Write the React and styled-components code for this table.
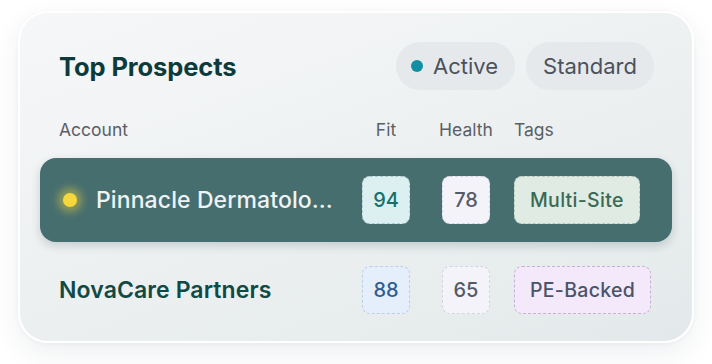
import * as React from "react";
import styled, { createGlobalStyle } from "styled-components";

const GlobalStyle = createGlobalStyle`
  html, body {
    margin: 0;
    padding: 0;
    background: #ffffff;
    font-family: Inter, "Noto Sans", sans-serif;
  }
`;

const Page = styled.div`
  width: 712px;
  height: 364px;
  padding: 11px 0 0 18px;
  box-sizing: border-box;
`;

const Card = styled.div`
  width: 676px;
  height: 332px;
  box-sizing: border-box;
  padding: 29px 20px 0 20px;
  border-radius: 30px;
  border: 2px solid #ffffff;
  background: linear-gradient(160deg, #f6f7f8 0%, #eef1f2 45%, #e3e9ea 100%);
  box-shadow: 0 10px 28px rgba(30, 50, 60, 0.08), 0 1px 4px rgba(30, 50, 60, 0.04);
`;

const TopBar = styled.div`
  display: flex;
  align-items: center;
  justify-content: space-between;
  padding: 0 18px 0 19px;
  height: 48px;
`;

const Title = styled.h2`
  margin: 0;
  font-size: 25.5px;
  font-weight: 700;
  letter-spacing: -0.1px;
  color: #0d3a3b;
`;

const Pills = styled.div`
  display: flex;
  gap: 11px;
`;

const Pill = styled.div`
  display: flex;
  align-items: center;
  gap: 10px;
  height: 48px;
  padding: 0 17px 0 ${(p) => (p.$dot ? "15px" : "17px")};
  border-radius: 24px;
  background: #e6e9ec;
  color: #4b525c;
  font-size: 22px;
  font-weight: 400;
`;

const Dot = styled.span`
  width: 12px;
  height: 12px;
  border-radius: 50%;
  background: #138fa3;
`;

const Grid = styled.div`
  display: grid;
  grid-template-columns: 303px 80px 72px 1fr;
  align-items: center;
  padding: 0 19px;
`;

const HeaderRow = styled(Grid)`
  margin-top: 29px;
  margin-bottom: 19px;
  height: 20px;
`;

const HeaderCell = styled.div`
  font-size: 17.5px;
  color: #5a5f66;
  width: ${(p) => (p.$center ? "48px" : "auto")};
  white-space: nowrap;
  display: flex;
  justify-content: ${(p) => (p.$center ? "center" : "flex-start")};
`;

const Row = styled(Grid)`
  height: 84px;
  border-radius: 16px;
  margin-bottom: 6px;
  background: ${(p) => (p.$active ? "#466e6f" : "transparent")};
  box-shadow: ${(p) =>
    p.$active ? "0 4px 10px rgba(20, 50, 55, 0.18)" : "none"};
`;

const Account = styled.div`
  display: flex;
  align-items: center;
  gap: 19px;
  min-width: 0;
  padding-right: 22px;
  padding-left: ${(p) => (p.$active ? "4px" : "0")};
`;

const Glow = styled.span`
  flex: none;
  width: 14px;
  height: 14px;
  border-radius: 50%;
  background: #f7d83c;
  box-shadow: 0 0 8px 5px rgba(247, 216, 60, 0.45);
`;

const Name = styled.span`
  font-size: 23px;
  font-weight: ${(p) => (p.$active ? 500 : 600)};
  letter-spacing: 0.1px;
  color: ${(p) => (p.$active ? "#eef3f4" : "#114a45")};
  white-space: nowrap;
  overflow: hidden;
  text-overflow: ellipsis;
`;

const tones = {
  teal: { bg: "#dcf0f2", fg: "#17706a", line: "rgba(110, 160, 170, 0.45)" },
  grey: { bg: "#f3f3f9", fg: "#555a68", line: "rgba(170, 175, 195, 0.45)" },
  blue: { bg: "#e5eefb", fg: "#2e5e90", line: "rgba(160, 180, 215, 0.55)" },
  green: { bg: "#e0ebe3", fg: "#3a6a55", line: "rgba(150, 175, 160, 0.55)" },
  lilac: { bg: "#f3e9fb", fg: "#4a5468", line: "rgba(190, 170, 205, 0.85)" },
};

const Chip = styled.div`
  box-sizing: border-box;
  height: 48px;
  min-width: 48px;
  padding: ${(p) => (p.$wide ? "0 15px" : "0")};
  display: inline-flex;
  align-items: center;
  justify-content: center;
  justify-self: start;
  border-radius: 8px;
  border: 1.5px dashed ${(p) => tones[p.$tone].line};
  background: ${(p) => tones[p.$tone].bg};
  color: ${(p) => tones[p.$tone].fg};
  font-size: ${(p) => (p.$wide ? "19.5px" : "20px")};
  letter-spacing: ${(p) => (p.$wide ? "0.3px" : "0")};
  font-weight: 500;
  white-space: nowrap;
`;

const prospects = [
  {
    name: "Pinnacle Dermatology Group",
    fit: 94,
    fitTone: "teal",
    health: 78,
    tag: "Multi-Site",
    tagTone: "green",
    active: true,
  },
  {
    name: "NovaCare Partners",
    fit: 88,
    fitTone: "blue",
    health: 65,
    tag: "PE-Backed",
    tagTone: "lilac",
    active: false,
  },
];

export default function App() {
  return (
    <>
      <GlobalStyle />
      <Page>
        <Card>
          <TopBar>
            <Title>Top Prospects</Title>
            <Pills>
              <Pill $dot>
                <Dot />
                Active
              </Pill>
              <Pill>Standard</Pill>
            </Pills>
          </TopBar>
          <HeaderRow>
            <HeaderCell>Account</HeaderCell>
            <HeaderCell $center>Fit</HeaderCell>
            <HeaderCell $center>Health</HeaderCell>
            <HeaderCell>Tags</HeaderCell>
          </HeaderRow>
          {prospects.map((p) => (
            <Row key={p.name} $active={p.active}>
              <Account $active={p.active}>
                {p.active && <Glow />}
                <Name $active={p.active}>{p.name}</Name>
              </Account>
              <Chip $tone={p.fitTone}>{p.fit}</Chip>
              <Chip $tone="grey">{p.health}</Chip>
              <Chip $tone={p.tagTone} $wide>
                {p.tag}
              </Chip>
            </Row>
          ))}
        </Card>
      </Page>
    </>
  );
}
